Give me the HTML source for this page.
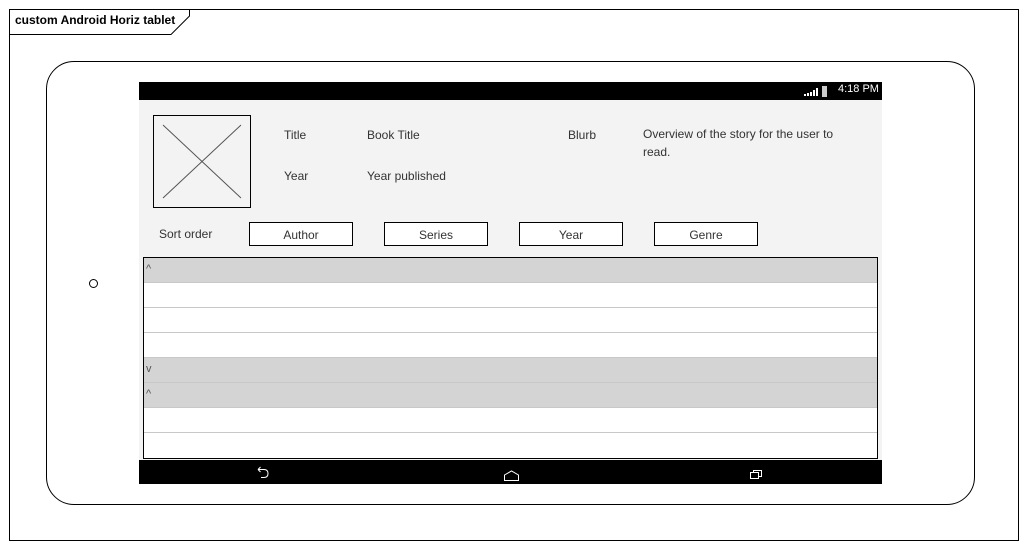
<!DOCTYPE html><html><head><style>
body{margin:0;width:1027px;height:548px;background:#fff;position:relative;font-family:"Liberation Sans",sans-serif;overflow:hidden}
.a{position:absolute;box-sizing:border-box}
.t{position:absolute;font-size:12px;color:#333;white-space:nowrap}
.btn{position:absolute;box-sizing:border-box;border:1px solid #000;background:#fff;font-size:12px;color:#333;text-align:center;line-height:24px;top:222px;width:104px;height:24px}
.row{position:absolute;left:144px;width:733px;height:25px;box-sizing:border-box;border-bottom:1px solid #c8c8c8;font-size:11px;color:#555;padding-left:2px;line-height:22px}
.g{background:#d4d4d4}
</style></head><body>
<div class="a" style="left:9px;top:9px;width:1010px;height:532px;border:1px solid #000"></div>
<svg class="a" style="left:9px;top:9px" width="182" height="27"><path d="M0 25.5H162L180.5 7V0" fill="none" stroke="#000"/></svg>
<div class="t" style="left:15px;top:13px;font-weight:bold;color:#000;font-size:12px">custom Android Horiz tablet</div>
<div class="a" style="left:46px;top:61px;width:929px;height:444px;border:1px solid #000;border-radius:28px"></div>
<div class="a" style="left:89px;top:279px;width:9px;height:9px;border:1px solid #000;border-radius:50%"></div>
<div class="a" style="left:139px;top:82px;width:743px;height:402px;background:#f3f3f3"></div>
<div class="a" style="left:139px;top:82px;width:743px;height:18px;background:#000"></div>
<svg class="a" style="left:804px;top:84px" width="24" height="14"><g fill="#fff"><rect x="0" y="10" width="2" height="2"/><rect x="3" y="9" width="2" height="3"/><rect x="6" y="8" width="2" height="4"/><rect x="9" y="6" width="2" height="6"/><rect x="12" y="4" width="2" height="8"/><rect x="18" y="2" width="5" height="11" fill="#ccc"/></g></svg>
<div class="t" style="left:838px;top:83px;color:#fff;font-size:11px">4:18 PM</div>
<div class="a" style="left:139px;top:460px;width:743px;height:24px;background:#000"></div>
<svg class="a" style="left:250px;top:464px" width="520" height="20"><g fill="none" stroke="#fff" stroke-width="1"><path d="M8 5.5H14Q18 5.5 18 9.5Q18 13.5 14 13.5H11M8 5.5L10.5 3M8 5.5L10.5 8"/><path d="M254.5 16.5H268.5V11L261.5 7L254.5 11Z"/><path d="M500.5 8.5H508.5V14.5H500.5ZM503.5 8.5V6.5H511.5V12.5H508.5"/></g></svg>
<div class="a" style="left:153px;top:115px;width:98px;height:93px;border:1px solid #000;background:#f3f3f3"></div>
<svg class="a" style="left:153px;top:115px" width="98" height="93"><path d="M10 10L88 83M88 10L10 83" stroke="#555" fill="none"/></svg>
<div class="t" style="left:284px;top:128px">Title</div>
<div class="t" style="left:367px;top:128px">Book Title</div>
<div class="t" style="left:568px;top:128px">Blurb</div>
<div class="t" style="left:643px;top:125px;line-height:18px">Overview of the story for the user to<br>read.</div>
<div class="t" style="left:284px;top:169px">Year</div>
<div class="t" style="left:367px;top:169px">Year published</div>
<div class="t" style="left:159px;top:227px">Sort order</div>
<div class="btn" style="left:249px">Author</div>
<div class="btn" style="left:384px">Series</div>
<div class="btn" style="left:519px">Year</div>
<div class="btn" style="left:654px">Genre</div>
<div class="a" style="left:143px;top:257px;width:735px;height:202px;border:1px solid #000;background:#fff"></div>
<div class="row g" style="top:258px">^</div>
<div class="row" style="top:283px"></div>
<div class="row" style="top:308px"></div>
<div class="row" style="top:333px"></div>
<div class="row g" style="top:358px">v</div>
<div class="row g" style="top:383px">^</div>
<div class="row" style="top:408px"></div>
<div class="row" style="top:433px;border-bottom:none"></div>
</body></html>
